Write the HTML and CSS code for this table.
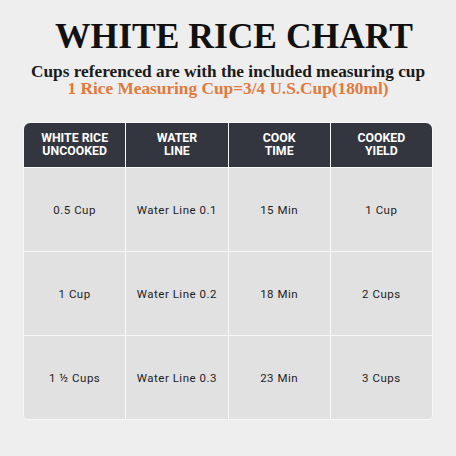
FILE: index.html
```html
<!DOCTYPE html>
<html>
<head>
<meta charset="utf-8">
<link rel="stylesheet" href="styles.css">
</head>
<body>
<div class="page">
  <h1 class="title">WHITE RICE CHART</h1>
  <p class="sub first">Cups referenced are with the included measuring cup</p>
  <p class="sub orange">1 Rice Measuring Cup=3/4 U.S.Cup(180ml)</p>
  <div class="chart">
    <div class="cell head">WHITE RICE<br>UNCOOKED</div>
    <div class="cell head">WATER<br>LINE</div>
    <div class="cell head">COOK<br>TIME</div>
    <div class="cell head">COOKED<br>YIELD</div>

    <div class="cell">0.5 Cup</div>
    <div class="cell">Water Line 0.1</div>
    <div class="cell">15 Min</div>
    <div class="cell">1 Cup</div>

    <div class="cell">1 Cup</div>
    <div class="cell">Water Line 0.2</div>
    <div class="cell">18 Min</div>
    <div class="cell">2 Cups</div>

    <div class="cell">1 ½ Cups</div>
    <div class="cell">Water Line 0.3</div>
    <div class="cell">23 Min</div>
    <div class="cell">3 Cups</div>
  </div>
</div>
</body>
</html>
```
FILE: styles.css
```css
html, body {
  margin: 0;
  padding: 0;
  background: #eeeeee;
}
.page {
  width: 456px;
  height: 456px;
  box-sizing: border-box;
  padding-top: 19px;
  display: flex;
  flex-direction: column;
  align-items: center;
}
.title {
  margin: 0;
  padding-left: 12px;
  font-family: "Liberation Serif", "Times New Roman", serif;
  font-weight: bold;
  font-size: 35.5px;
  line-height: 35px;
  color: #111;
  letter-spacing: 0;
}
.sub {
  margin: 0;
  font-family: "Liberation Serif", "Times New Roman", serif;
  font-weight: bold;
  font-size: 17.3px;
  line-height: 17px;
  color: #1a1a1a;
}
.first {
  margin-top: 9px;
}
.orange {
  color: #e07a3c;
}
.chart {
  margin-top: 25px;
  width: 408px;
  display: grid;
  grid-template-columns: repeat(4, 1fr);
  grid-template-rows: 44px repeat(3, 83px);
  gap: 1px;
  background: #f8f8f8;
  border: 1px solid #f8f8f8;
  border-radius: 7px 7px 5px 5px;
  overflow: hidden;
}
.cell {
  background: #e1e1e1;
  display: flex;
  align-items: center;
  justify-content: center;
  text-align: center;
  font-family: Roboto, "Liberation Sans", sans-serif;
  font-size: 11.5px;
  color: #1e1e1e;
  letter-spacing: 0.5px;
}
.head {
  background: #33363e;
  color: #fff;
  font-weight: bold;
  font-size: 12.3px;
  line-height: 13px;
  letter-spacing: 0;
}
```
